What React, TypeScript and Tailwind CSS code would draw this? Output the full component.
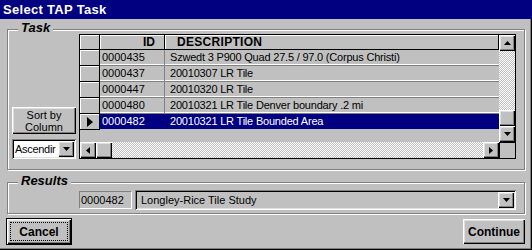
import React from "react";

const raised =
  "bg-[#c0c0c0] shadow-[inset_1px_1px_#fff,inset_-1px_-1px_#000,inset_-2px_-2px_#808080,inset_2px_2px_#dfdfdf]";
const sunken =
  "shadow-[inset_1px_1px_#808080,inset_-1px_-1px_#fff,inset_2px_2px_#000,inset_-2px_-2px_#dfdfdf]";
const etched = "border border-[#808080] shadow-[inset_1px_1px_#fff,1px_1px_#fff]";
const dither =
  "bg-[image:repeating-conic-gradient(#c0c0c0_0_25%,#fff_0_50%)] bg-[length:2px_2px]";
const headCell =
  "bg-[#c0c0c0] border-r border-b border-black shadow-[inset_1px_1px_#fff]";

const rows = [
  { id: "0000435", desc: "Szwedt 3 P900 Quad 27.5 / 97.0 (Corpus Christi)" },
  { id: "0000437", desc: "20010307 LR Tile" },
  { id: "0000447", desc: "20010320 LR Tile" },
  { id: "0000480", desc: "20010321 LR Tile Denver boundary .2 mi" },
  { id: "0000482", desc: "20010321 LR Tile Bounded Area" },
];

function Arrow({ dir }: { dir: "up" | "down" | "left" | "right" }) {
  const pts = {
    up: "3.5,0 7,4 0,4",
    down: "0,0 7,0 3.5,4",
    left: "4,0 4,7 0,3.5",
    right: "0,0 4,3.5 0,7",
  }[dir];
  const vertical = dir === "up" || dir === "down";
  return (
    <svg
      width={vertical ? 7 : 4}
      height={vertical ? 4 : 7}
      viewBox={vertical ? "0 0 7 4" : "0 0 4 7"}
    >
      <polygon points={pts} fill="#000" />
    </svg>
  );
}

function ScrollButton({ dir }: { dir: "up" | "down" | "left" | "right" }) {
  return (
    <div className={`w-[16px] h-[16px] shrink-0 flex items-center justify-center ${raised}`}>
      <Arrow dir={dir} />
    </div>
  );
}

function TaskGrid() {
  return (
    <div className="w-[437px] h-[125px] border border-black grid grid-cols-[1fr_16px] grid-rows-[1fr_16px] bg-[#c0c0c0]">
      <div className="flex flex-col overflow-hidden">
        <div className="flex h-[15px] shrink-0 font-bold text-[12px] leading-[14px]">
          <div className={`w-[20px] ${headCell}`} />
          <div className={`w-[65px] text-right pr-[9px] ${headCell}`}>ID</div>
          <div className={`flex-1 pl-[12px] tracking-[0.3px] ${headCell}`}>DESCRIPTION</div>
        </div>
        {rows.map((r, i) => {
          const sel = i === rows.length - 1;
          return (
            <div key={r.id} className="flex h-[16px] shrink-0 leading-[15px]">
              <div className={`w-[20px] flex items-center justify-center ${headCell}`}>
                {sel && (
                  <svg width="6" height="10" viewBox="0 0 6 10">
                    <polygon points="0,0 6,5 0,10" fill="#000" />
                  </svg>
                )}
              </div>
              <div
                className={`flex flex-1 border-b ${
                  sel
                    ? "bg-[#000080] text-white border-[#c0c0c0]"
                    : "border-[#808080] shadow-[inset_0_-1px_#fff]"
                }`}
              >
                <div
                  className={`w-[65px] pl-[2px] border-r ${
                    sel ? "border-[#000080]" : "border-[#808080]"
                  }`}
                >
                  {r.id}
                </div>
                <div className="flex-1 pl-[5px] whitespace-nowrap overflow-hidden tracking-[-0.2px]">
                  {r.desc}
                </div>
              </div>
            </div>
          );
        })}
      </div>
      <div className="flex flex-col">
        <ScrollButton dir="up" />
        <div className={`flex-1 ${dither}`} />
        <div className={`w-[16px] h-[16px] ${raised}`} />
        <ScrollButton dir="down" />
      </div>
      <div className="flex">
        <ScrollButton dir="left" />
        <div className={`w-[16px] h-[16px] ${raised}`} />
        <div className={`flex-1 ${dither}`} />
        <ScrollButton dir="right" />
      </div>
      <div className="border-l border-t border-black bg-[#c0c0c0]" />
    </div>
  );
}

export default function App() {
  return (
    <div className="w-[532px] h-[250px] bg-[#c0c0c0] flex flex-col font-['Liberation_Sans',Arial,sans-serif] text-[11px] text-black shadow-[inset_-1px_-1px_#000,inset_-2px_-2px_#808080] overflow-hidden">
      <div className="h-[19px] shrink-0 bg-[#000080] text-white font-bold text-[13px] leading-[19px] pl-[3px] tracking-[0.3px]">
        Select TAP Task
      </div>

      <div className="relative mt-[10px] ml-[7px] w-[518px] h-[141px] shrink-0">
        <div className={`absolute inset-0 ${etched}`} />
        <span className="absolute left-[11px] top-[-8px] px-[3px] bg-[#c0c0c0] font-bold italic text-[13px] leading-[14px]">
          Task
        </span>
        <div className="relative flex items-end gap-[3px] pt-[5px] pl-[5px]">
          <div className="flex flex-col gap-[5px] w-[64px]">
            <div className={`h-[27px] flex flex-col items-center justify-center leading-[12px] ${raised}`}>
              <span>Sort by</span>
              <span>Column</span>
            </div>
            <div className={`h-[20px] bg-white flex items-center p-[2px] ${sunken}`}>
              <span className="flex-1 min-w-0 whitespace-nowrap pl-[1px] tracking-[-0.3px]">Ascendir</span>
              <div className={`w-[16px] h-[16px] shrink-0 flex items-center justify-center ${raised}`}>
                <Arrow dir="down" />
              </div>
            </div>
          </div>
          <TaskGrid />
        </div>
      </div>

      <div className="relative mt-[12px] ml-[7px] w-[518px] h-[32px] shrink-0">
        <div className={`absolute inset-0 ${etched}`} />
        <span className="absolute left-[11px] top-[-8px] px-[3px] bg-[#c0c0c0] font-bold italic text-[13px] leading-[14px]">
          Results
        </span>
        <div className="relative flex items-center gap-[3px] pt-[8px] pl-[72px]">
          <div className="w-[53px] h-[18px] border border-t-[#808080] border-l-[#808080] border-b-white border-r-white pl-[1px] leading-[16px]">
            0000482
          </div>
          <div className={`w-[381px] h-[20px] flex items-center p-[2px] ${sunken}`}>
            <span className="flex-1 pl-[4px] leading-[16px]">Longley-Rice Tile Study</span>
            <div className={`w-[16px] h-[16px] shrink-0 flex items-center justify-center ${raised}`}>
              <Arrow dir="down" />
            </div>
          </div>
        </div>
      </div>

      <div className="flex justify-between items-start mt-[4px] pl-[6px] pr-[7px]">
        <div className="border border-black">
          <div className={`w-[64px] h-[25px] p-[3px] ${raised}`}>
            <div className="h-full border border-dotted border-black flex items-center justify-center font-bold text-[12px]">
              Cancel
            </div>
          </div>
        </div>
        <div className={`mt-[1px] w-[62px] h-[25px] flex items-center justify-center font-bold text-[12px] ${raised}`}>
          Continue
        </div>
      </div>
    </div>
  );
}
